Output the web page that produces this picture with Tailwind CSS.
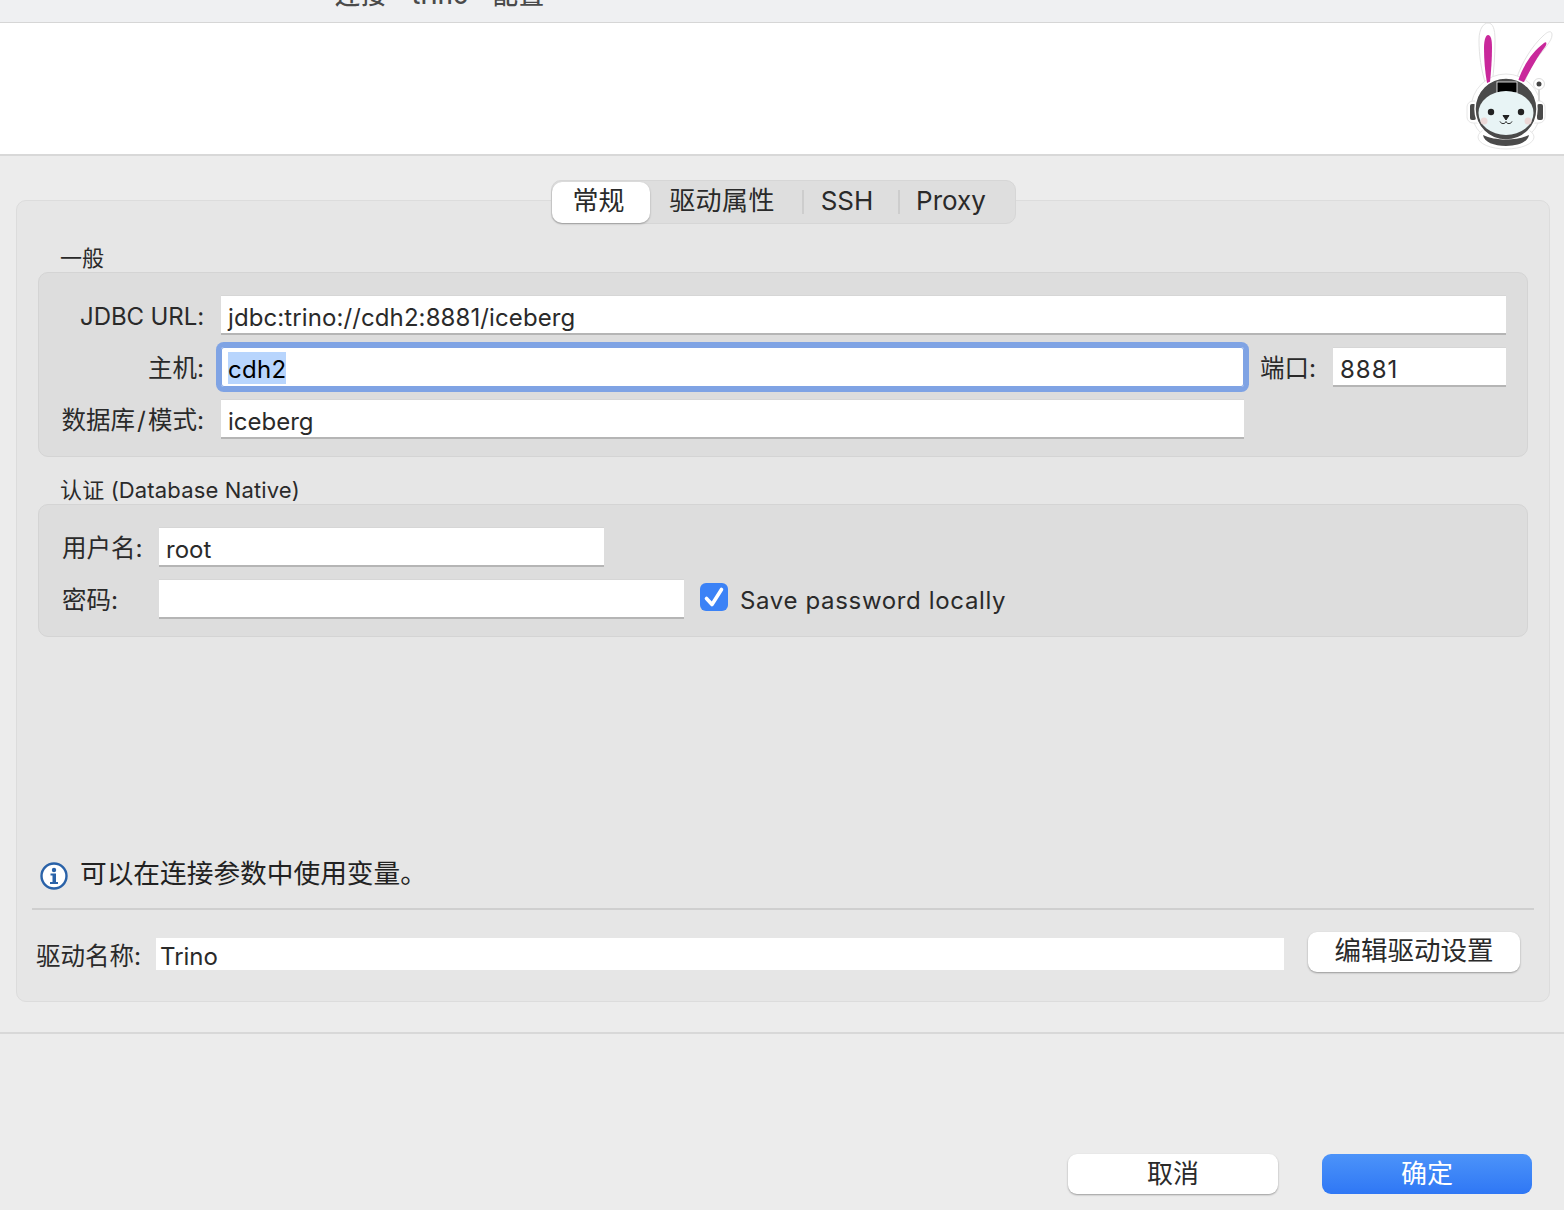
<!DOCTYPE html>
<html lang="en">
<head>
    <meta charset="UTF-8" />
    <title>连接 "trino" 配置</title>
    <script src="https://cdn.jsdelivr.net/npm/@tailwindcss/browser@4"></script>
</head>
<body class="w-[1564px] h-[1210px] overflow-hidden bg-[#ececec] text-[#2a2a2a] font-[Inter,'Noto_Sans_CJK_SC',sans-serif]">

<!-- Title bar -->
<div class="h-[23px] bg-[#eff0f2] border-b border-[#d6d6d6] overflow-hidden pl-[335px]">
    <div class="flex gap-[12px] -mt-[20px] text-[25px] leading-[30px] text-[#4a4a4a] font-medium">
        <span class="tracking-[1px]">连接</span><span class="tracking-[0.4px]">"trino"</span><span class="tracking-[1px]">配置</span>
    </div>
</div>

<!-- Banner with logo -->
<div class="h-[133px] bg-white border-b-2 border-[#d8d8d8] flex justify-end">
    <svg class="w-[124px] h-[130px]" viewBox="0 23 124 130" fill="none">
        <!-- sticker outline -->
        <g stroke="#e2e2e2" stroke-width="1">
            <path d="M39 40C39 28 44 23 48 23C53 23 55 29 55 40C55 55 54 70 52 84L46 85C41 70 39 55 39 40Z" fill="#fff"/>
            <path d="M76 80C82 62 92 46 103 36C108 31 112 30 112 35C112 41 104 49 97 58C91 66 87 75 84 84Z" fill="#fff"/>
        </g>
        <circle cx="66" cy="109" r="35" fill="#fff" stroke="#e6e6e6"/>
        <rect x="27" y="101" width="78" height="22" rx="6" fill="#fff" stroke="#e6e6e6"/>
        <ellipse cx="66" cy="137" rx="28" ry="12" fill="#fff" stroke="#e6e6e6"/>
        <!-- ears -->
        <path d="M44 48C44 39 46 35 48 35C51 35 52 40 52 48C52 60 51 72 50 82L47 83C45 72 44 60 44 48Z" fill="#c9289b"/>
        <path d="M78 81C83 66 92 52 104 43C107 41 107 44 105 47C98 56 91 68 84 82Z" fill="#c9289b"/>
        <!-- antenna -->
        <path d="M99 88V101" stroke="#d8d8d8" stroke-width="2"/>
        <circle cx="99" cy="84" r="5.500" fill="#fff" stroke="#ddd"/>
        <circle cx="99" cy="84" r="2.500" fill="#444"/>
        <!-- helmet -->
        <rect x="30" y="104" width="6" height="16" rx="2" fill="#4a4a4a"/>
        <rect x="97" y="104" width="6" height="16" rx="2" fill="#4a4a4a"/>
        <circle cx="66" cy="109" r="31" fill="#4a4a4a" stroke="#fff" stroke-width="1.500"/>
        <rect x="57" y="82" width="20" height="11" fill="#000" stroke="#fff" stroke-width="0.800"/>
        <ellipse cx="66" cy="113" rx="27.500" ry="22" fill="#e8f4f5"/>
        <path d="M43 135C55 141 77 141 89 135C88 142 78 146 66 146C54 146 44 142 43 135Z" fill="#4a4a4a"/>
        <!-- face -->
        <circle cx="44" cy="121" r="3.500" fill="#ecd9d8"/>
        <circle cx="88" cy="121" r="3.500" fill="#ecd9d8"/>
        <circle cx="51" cy="112" r="3.200" fill="#222"/>
        <circle cx="81" cy="112" r="3.200" fill="#222"/>
        <path d="M63 115.500H69L66 120Z" fill="#222" stroke="#222" stroke-linejoin="round"/>
        <path d="M60 121.500C61 124 65 124.500 66 121.500C67 124.500 71 124 72 121.500" stroke="#222" stroke-width="1"/>
    </svg>
</div>

<!-- Settings panel -->
<div class="ml-[16px] mt-[44px] w-[1534px] h-[802px] bg-[#e6e6e6] border border-[#dcdcdc] rounded-[10px]">

    <!-- Tabs -->
    <div class="w-[465px] h-[44px] -mt-[21px] mx-auto flex items-center bg-[#dedede] border border-[#d6d6d6] rounded-[10px] text-[26px]">
        <div class="w-[98px] h-[41px] pb-[4px] pr-[4px] bg-white rounded-[10px] shadow-[0_1px_2px_rgba(0,0,0,0.3)] flex items-center justify-center">常规</div>
        <div class="w-[145px] pb-[4px] text-center tracking-[0.4px]">驱动属性</div>
        <div class="ml-[7px] w-[2px] h-[24px] bg-[#cdcdcd]"></div>
        <div class="w-[87px] pb-[4px] text-center">SSH</div>
        <div class="ml-[7px] w-[2px] h-[24px] bg-[#cdcdcd]"></div>
        <div class="w-[103px] pb-[4px] text-center">Proxy</div>
    </div>

    <!-- General group -->
    <div class="h-[48px] pl-[43px] flex items-end text-[22px] leading-[28px]">一般</div>
    <div class="ml-[21px] w-[1490px] h-[185px] bg-[#dddddd] border border-[#d4d4d4] rounded-[10px] pt-[22px] text-[24px] flex flex-col gap-[12px]">
        <div class="flex items-center h-[40px]">
            <div class="w-[165px] mt-[4px] text-right -tracking-[0.1px]">JDBC URL:</div>
            <div class="ml-[17px] w-[1285px] h-[40px] bg-white border-t border-t-[#d6d6d6] border-b-2 border-b-[#b5b5b5] pl-[7px] leading-[44px] tracking-[0.1px]">jdbc:trino://cdh2:8881/iceberg</div>
        </div>
        <div class="flex items-center h-[40px]">
            <div class="w-[165px] mt-[2px] text-right text-[24.5px]">主机:</div>
            <div class="ml-[17px] w-[1023px] h-[40px] bg-white pl-[7px] flex items-center rounded-[3px] shadow-[0_0_0_5px_#7fa3e4,inset_0_0_0_1px_#7fa3e4]">
                <span class="mt-[1px] bg-[#b8d5fd] text-black h-[32px] leading-[35px] tracking-[0.3px]">cdh2</span>
            </div>
            <div class="ml-[16px] w-[56px] mt-[2px] text-right text-[24.5px] whitespace-nowrap">端口:</div>
            <div class="ml-[17px] w-[173px] h-[40px] bg-white border-t border-t-[#d6d6d6] border-b-2 border-b-[#b5b5b5] pl-[7px] leading-[44px] tracking-[1px]">8881</div>
        </div>
        <div class="flex items-center h-[40px]">
            <div class="w-[165px] mt-[2px] text-right text-[24.5px]">数据库<span class="mx-[2px]">/</span>模式:</div>
            <div class="ml-[17px] w-[1023px] h-[40px] bg-white border-t border-t-[#d6d6d6] border-b-2 border-b-[#b5b5b5] pl-[7px] leading-[44px]">iceberg</div>
        </div>
    </div>

    <!-- Auth group -->
    <div class="h-[47px] pl-[43px] flex items-end text-[22px] leading-[28px] tracking-[0.15px]">认证 (Database Native)</div>
    <div class="ml-[21px] w-[1490px] h-[133px] bg-[#dddddd] border border-[#d4d4d4] rounded-[10px] pt-[22px] text-[24px] flex flex-col gap-[12px]">
        <div class="flex items-center h-[40px]">
            <div class="w-[120px] mt-[2px] pl-[23px] text-[24.5px]">用户名:</div>
            <div class="w-[445px] h-[40px] bg-white border-t border-t-[#d6d6d6] border-b-2 border-b-[#b5b5b5] pl-[7px] leading-[44px]">root</div>
        </div>
        <div class="flex items-center h-[40px]">
            <div class="w-[120px] mt-[2px] pl-[23px] text-[24.5px]">密码:</div>
            <div class="w-[525px] h-[40px] bg-white border-t border-t-[#d6d6d6] border-b-2 border-b-[#b5b5b5]"></div>
            <div class="ml-[16px] -mt-[4px] w-[28px] h-[28px] rounded-[6px] bg-[#3b82f6] flex items-center justify-center">
                <svg class="w-[28px] h-[28px]" viewBox="0 0 28 28" fill="none"><path d="M6.500 15.500L12 21.500L21.500 6.500" stroke="#fff" stroke-width="3.600" stroke-linecap="round" stroke-linejoin="round"/></svg>
            </div>
            <div class="ml-[12px] mt-[4px] tracking-[0.65px]">Save password locally</div>
        </div>
    </div>

    <!-- Variables hint -->
    <div class="mt-[217px] ml-[23px] h-[40px] flex items-center text-[26.700px] text-[#222]">
        <svg class="w-[28px] h-[28px] mt-[3px]" viewBox="0 0 28 28" fill="none">
            <circle cx="14" cy="14" r="12.500" fill="#fff" stroke="#2a62a8" stroke-width="2.400"/>
            <circle cx="14" cy="8" r="2.200" fill="#2a62a8"/>
            <path d="M10.500 11.500H16V20H18V22H10V20H12.500V13.500H10.500Z" fill="#2a62a8"/>
        </svg>
        <span class="ml-[12px] -mt-[2px]">可以在连接参数中使用变量。</span>
    </div>
    <div class="mt-[14px] ml-[15px] w-[1502px] h-[2px] bg-[#cfcfcf]"></div>

    <!-- Driver row -->
    <div class="mt-[21px] ml-[19px] h-[40px] flex items-center text-[24px]">
        <div class="w-[120px] mt-[10px] text-[24.5px]">驱动名称:</div>
        <div class="w-[1128px] h-[32px] mt-[6px] bg-white pl-[4px] leading-[38px]">Trino</div>
        <div class="ml-[24px] mt-[2px] pb-[2px] w-[212px] h-[40px] bg-white rounded-[9px] shadow-[0_1px_2px_rgba(0,0,0,0.35)] text-[26.500px] flex items-center justify-center">编辑驱动设置</div>
    </div>
</div>

<!-- Footer -->
<div class="mt-[30px] h-[177px] border-t-2 border-[#d8d8d8] flex justify-end items-end gap-[44px] pr-[32px] pb-[15px] text-[26px]">
    <div class="w-[210px] h-[40px] pb-[2px] bg-white rounded-[9px] shadow-[0_1px_2px_rgba(0,0,0,0.35)] flex items-center justify-center">取消</div>
    <div class="w-[210px] h-[40px] pb-[2px] bg-gradient-to-b from-[#4c93f9] to-[#2f77f5] text-white rounded-[9px] flex items-center justify-center">确定</div>
</div>

</body>
</html>
